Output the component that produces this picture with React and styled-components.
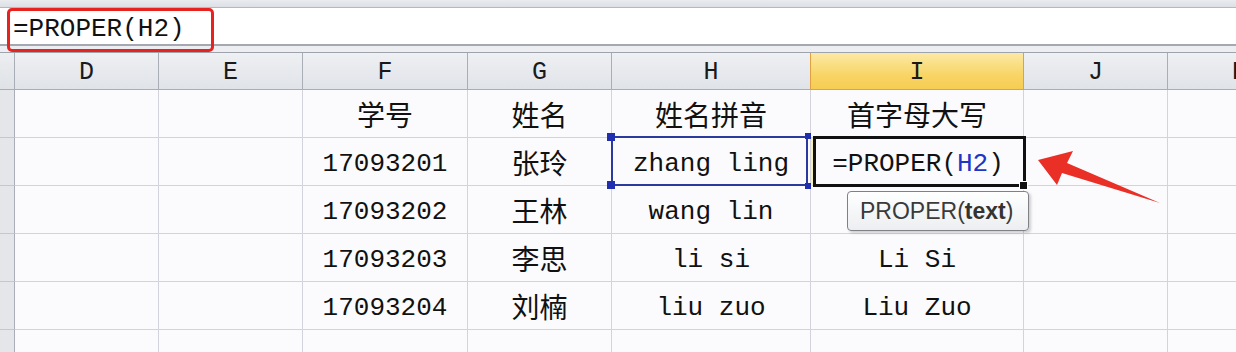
import React from "react";
import styled, { createGlobalStyle } from "styled-components";

const monoFont = `"Liberation Mono", "Noto Sans CJK SC", monospace`;
const cjkFont = `"Noto Sans CJK SC", "Liberation Sans", sans-serif`;

const columns = ["D", "E", "F", "G", "H", "I", "J", "K"];

const rows = [
  { id: "学号", name: "姓名", pinyin: "姓名拼音", proper: "首字母大写", cjk: true },
  { id: "17093201", name: "张玲", pinyin: "zhang ling", proper: null },
  { id: "17093202", name: "王林", pinyin: "wang lin", proper: "" },
  { id: "17093203", name: "李思", pinyin: "li si", proper: "Li Si" },
  { id: "17093204", name: "刘楠", pinyin: "liu zuo", proper: "Liu Zuo" },
  { id: "", name: "", pinyin: "", proper: "" },
];

const App = () => {
  return (
    <Page>
      <GlobalStyle />
      <TopStrip />
      <FormulaBar>=PROPER(H2)</FormulaBar>
      <Gap />
      <Sheet>
        <CornerCell />
        {columns.map((c) => (
          <ColHeader key={c} $current={c === "I"}>
            {c}
          </ColHeader>
        ))}
        {rows.map((r, i) => (
          <React.Fragment key={i}>
            <RowHeader />
            <Cell />
            <Cell />
            <Cell $cjk={r.cjk}>{r.id}</Cell>
            <Cell $cjk>{r.name}</Cell>
            <Cell $cjk={r.cjk} $selected={i === 1}>
              {r.pinyin}
              {i === 1 && (
                <>
                  <Handle $x="left" $y="top" />
                  <Handle $x="left" $y="bottom" />
                  <Handle $x="right" $y="top" $small />
                  <Handle $x="right" $y="bottom" $small />
                </>
              )}
            </Cell>
            <Cell $cjk={r.cjk} $active={i === 1}>
              {r.proper === null ? (
                <>
                  =PROPER(<Ref>H2</Ref>)
                  <FillHandle />
                </>
              ) : (
                r.proper
              )}
            </Cell>
            <Cell />
            <Cell />
          </React.Fragment>
        ))}
      </Sheet>

      <Highlight />
      <Tooltip>
        PROPER(<b>text</b>)
      </Tooltip>
      <Arrow viewBox="0 0 1236 352">
        <polygon
          points="1038,160 1073,151 1067,163 1160,203 1062,173 1057,185"
          fill="#ea2f27"
        />
      </Arrow>
    </Page>
  );
};

// Styles
const GlobalStyle = createGlobalStyle`
  html, body {
    margin: 0;
    padding: 0;
    background: #fafafc;
    overflow: hidden;
  }
`;

const Page = styled.div`
  position: relative;
  width: 1236px;
  height: 352px;
  overflow: hidden;
  background: #fafafc;
`;

const TopStrip = styled.div`
  height: 7px;
  background: linear-gradient(#e9ebef, #dcdfe4);
  border-bottom: 1px solid #b4b8c0;
`;

const FormulaBar = styled.div`
  box-sizing: border-box;
  height: 38px;
  padding: 6px 0 0 13px;
  background: #ffffff;
  border-bottom: 2px solid #a4a8b0;
  font-family: ${monoFont};
  font-size: 26px;
  line-height: 30px;
  color: #111;
`;

const Gap = styled.div`
  height: 6px;
  background: #eceef2;
  border-bottom: 1px solid #9fa3ab;
`;

const Sheet = styled.div`
  display: grid;
  grid-template-columns: 15px 144px 144px 165px 144px 199px 213px 144px 144px;
  grid-template-rows: 37px repeat(6, 48px);
  width: 1312px;
`;

const CornerCell = styled.div`
  box-sizing: border-box;
  background: linear-gradient(#eceef1, #dfe2e6);
  border-right: 1px solid #a9adb5;
  border-bottom: 1px solid #a9adb5;
`;

const ColHeader = styled.div`
  box-sizing: border-box;
  display: flex;
  align-items: center;
  justify-content: center;
  padding-top: 2px;
  font-family: ${monoFont};
  font-size: 25px;
  color: #1a1a1a;
  background: ${(p) =>
    p.$current
      ? "linear-gradient(#fce9a6, #f8d566 60%, #f6cd52)"
      : "linear-gradient(#eef0f3, #e0e3e8)"};
  border-right: 1px solid ${(p) => (p.$current ? "#e3a040" : "#a9adb5")};
  border-left: ${(p) => (p.$current ? "1px solid #e3a040" : "none")};
  border-bottom: 1px solid ${(p) => (p.$current ? "#e3a040" : "#a9adb5")};
  margin-left: ${(p) => (p.$current ? "-1px" : "0")};
`;

const RowHeader = styled.div`
  box-sizing: border-box;
  background: #e4e6ea;
  border-right: 1px solid #a9adb5;
  border-bottom: 1px solid #c4c7cd;
`;

const Cell = styled.div`
  box-sizing: border-box;
  position: relative;
  display: flex;
  align-items: center;
  justify-content: center;
  padding-top: ${(p) => (p.$cjk ? "0" : "4px")};
  white-space: nowrap;
  background: #fbfbfd;
  border-right: 1px solid #d3d4db;
  border-bottom: 1px solid #d3d4db;
  font-family: ${(p) => (p.$cjk ? cjkFont : monoFont)};
  font-size: ${(p) => (p.$cjk ? "28px" : "26px")};
  color: #111;

  ${(p) =>
    p.$selected &&
    `
    &::after {
      content: "";
      position: absolute;
      top: -2px;
      left: -1px;
      right: 2px;
      bottom: -1px;
      border: 2px solid #2a3a9f;
    }
  `}

  ${(p) =>
    p.$active &&
    `
    z-index: 2;
    border-left: 2px solid #f5f0b8;
    &::after {
      content: "";
      position: absolute;
      top: -2px;
      left: 0;
      right: -3px;
      bottom: -2px;
      border: 3px solid #111;
    }
  `}
`;

const Handle = styled.span`
  position: absolute;
  z-index: 1;
  width: ${(p) => (p.$small ? "6px" : "8px")};
  height: ${(p) => (p.$small ? "6px" : "8px")};
  background: #1f2fb0;
  ${(p) => (p.$x === "left" ? "left: -5px;" : "right: -1px;")}
  ${(p) => (p.$y === "top" ? "top: -5px;" : "bottom: -4px;")}
`;

const FillHandle = styled.span`
  position: absolute;
  z-index: 3;
  right: -5px;
  bottom: -5px;
  width: 7px;
  height: 7px;
  background: #111;
  border: 1px solid #fff;
`;

const Ref = styled.span`
  color: #2035c4;
`;

const Highlight = styled.div`
  position: absolute;
  left: 7px;
  top: 8px;
  width: 207px;
  height: 44px;
  box-sizing: border-box;
  border: 3px solid #e8231f;
  border-radius: 5px;
`;

const Tooltip = styled.div`
  position: absolute;
  z-index: 5;
  left: 847px;
  top: 191px;
  width: 182px;
  height: 40px;
  box-sizing: border-box;
  padding-left: 12px;
  display: flex;
  align-items: center;
  border: 1px solid #7f8186;
  border-radius: 4px;
  background: linear-gradient(#ffffff, #eceef1);
  box-shadow: 2px 2px 3px rgba(0, 0, 0, 0.18);
  font-family: "Liberation Sans", sans-serif;
  font-size: 23px;
  color: #3a3a3a;

  b {
    font-weight: 700;
    color: #333;
  }
`;

const Arrow = styled.svg`
  position: absolute;
  z-index: 6;
  left: 0;
  top: 0;
  width: 1236px;
  height: 352px;
  pointer-events: none;
`;

export default App;
